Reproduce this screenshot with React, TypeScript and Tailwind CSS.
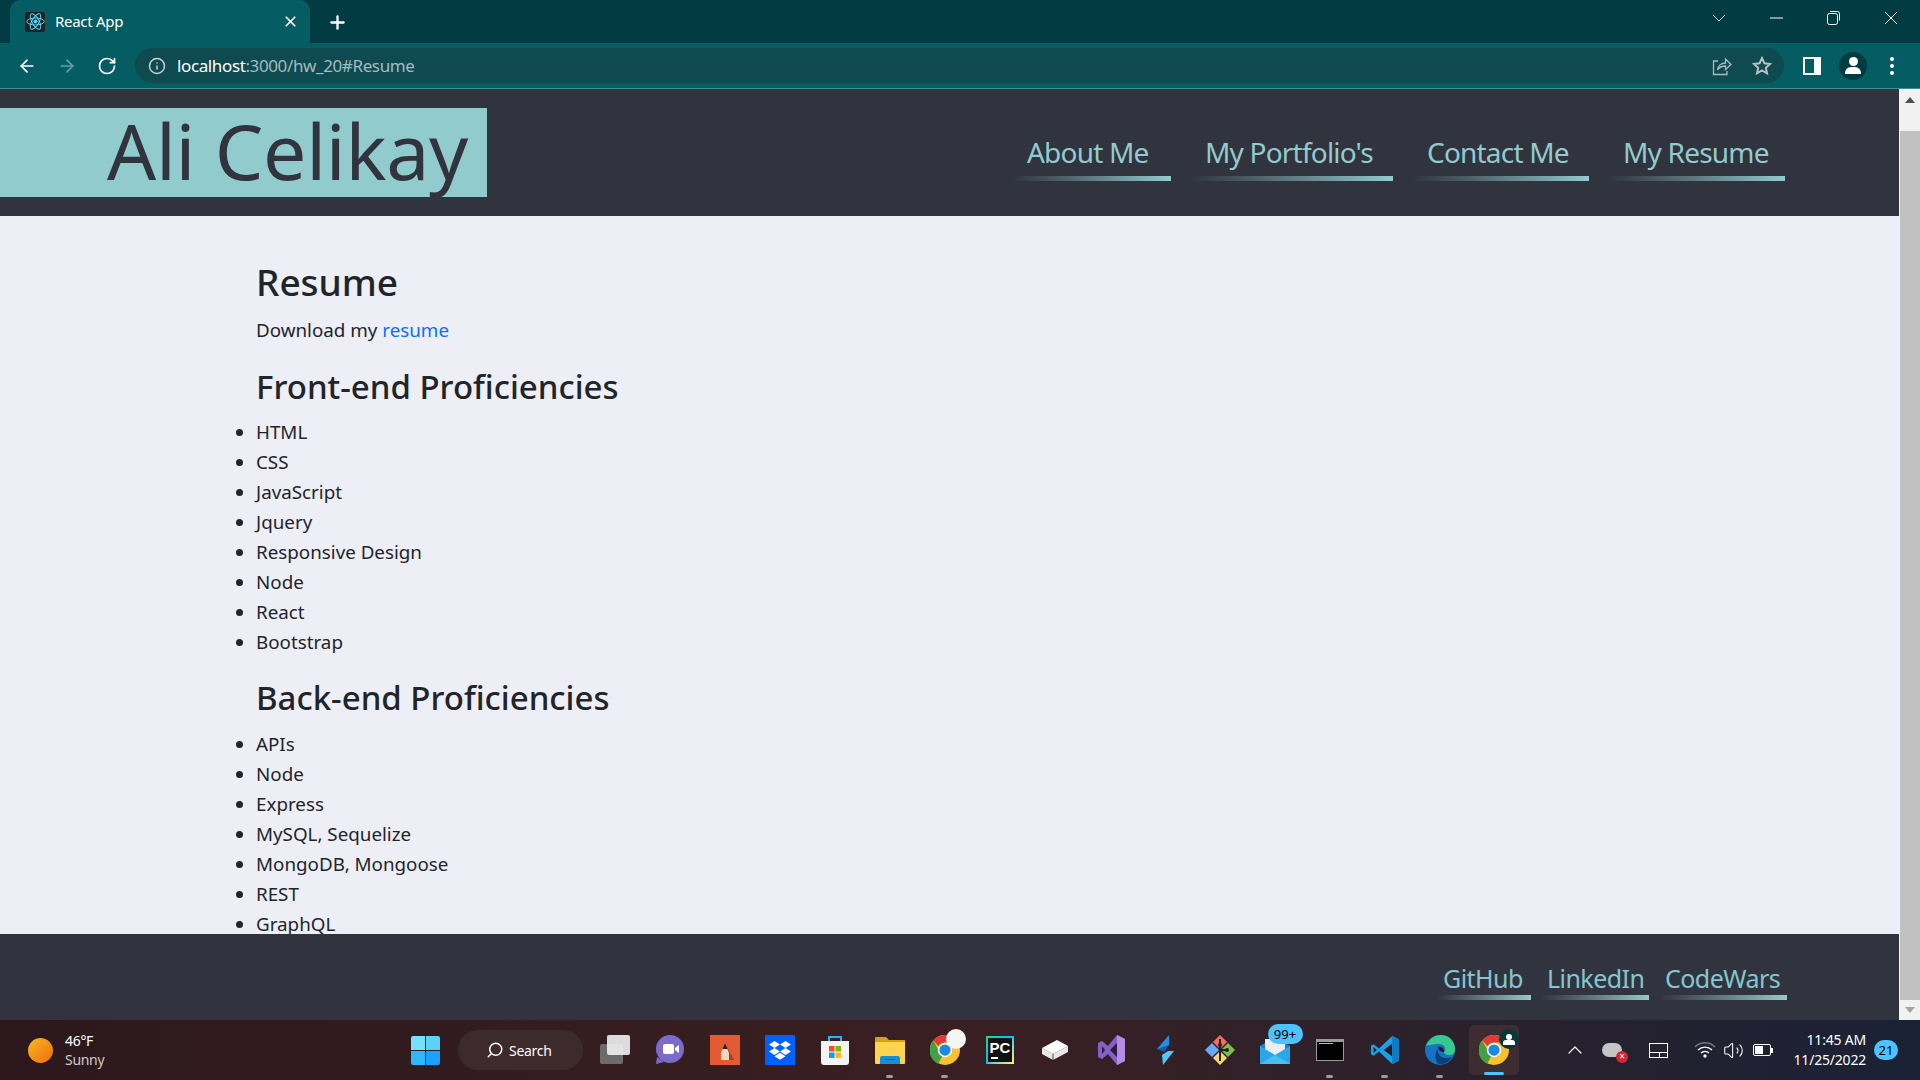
import React from "react";
import { ArrowLeft, ArrowRight, RotateCw, Info, Plus, X, ChevronUp, Search, Volume2 } from "lucide-react";

const navItems: [string, string][] = [
  ["About Me", "w-[158px]"],
  ["My Portfolio's", "w-[202px]"],
  ["Contact Me", "w-[176px]"],
  ["My Resume", "w-[176px]"],
];
const footItems: [string, string][] = [
  ["GitHub", "w-[94px]"],
  ["LinkedIn", "w-[108px]"],
  ["CodeWars", "w-[128px]"],
];
const front = ["HTML", "CSS", "JavaScript", "Jquery", "Responsive Design", "Node", "React", "Bootstrap"];
const back = ["APIs", "Node", "Express", "MySQL, Sequelize", "MongoDB, Mongoose", "REST", "GraphQL"];

function Atom({ size = 16, color = "#61dafb" }: { size?: number; color?: string }) {
  return (
    <svg width={size} height={size} viewBox="0 0 24 24" fill="none" stroke={color} strokeWidth="1.2">
      <circle cx="12" cy="12" r="2" fill={color} />
      <ellipse cx="12" cy="12" rx="11" ry="4.4" />
      <ellipse cx="12" cy="12" rx="11" ry="4.4" transform="rotate(60 12 12)" />
      <ellipse cx="12" cy="12" rx="11" ry="4.4" transform="rotate(120 12 12)" />
    </svg>
  );
}

function ChromeIcon({ size = 30 }: { size?: number }) {
  return (
    <svg width={size} height={size} viewBox="0 0 48 48">
      <circle cx="24" cy="24" r="24" fill="#fbc02d" />
      <path d="M24 0a24 24 0 0 1 20.8 12H24a12 12 0 0 0-10.4 6L5 8.500A24 24 0 0 1 24 0z" fill="#e53935" />
      <path d="M5 8.500l8.600 15.500a12 12 0 0 0 6.400 9.300L13 46A24 24 0 0 1 5 8.500z" fill="#43a047" />
      <circle cx="24" cy="24" r="11.500" fill="#fff" />
      <circle cx="24" cy="24" r="9" fill="#1e88e5" />
    </svg>
  );
}

const tbIcons: React.ReactNode[] = [
  <div key="tv" className="relative w-[30px] h-[30px]">
    <div className="absolute left-0 bottom-[1px] w-[23px] h-[20px] rounded-[2px] bg-[#6b6b6b]" />
    <div className="absolute right-0 top-0 w-[23px] h-[20px] rounded-[2px] bg-[#f1f1f1] opacity-90" />
  </div>,
  <svg key="meet" width="30" height="30" viewBox="0 0 30 30">
    <circle cx="15" cy="14" r="14" fill="#7b6ccc" />
    <path d="M2 22l-1 7 8-2z" fill="#7b6ccc" />
    <rect x="8" y="9" width="11" height="10" rx="2" fill="#fff" />
    <path d="M20 13l4-3v8l-4-3z" fill="#fff" />
  </svg>,
  <div key="skb" className="w-[30px] h-[30px] bg-[#e35a33] flex items-center justify-center">
    <svg width="30" height="30" viewBox="0 0 30 30">
      <path d="M15 8l9 17h-9z" fill="#a53d22" />
      <path d="M15 8l-4 10v7h8v-7z" fill="#f0d7c0" />
      <path d="M15 8l-2.500 6h5z" fill="#222" />
    </svg>
  </div>,
  <div key="db" className="w-[30px] h-[30px] bg-[#0061fe] flex items-center justify-center">
    <svg width="24" height="24" viewBox="0 0 24 24" fill="#fff">
      <path d="M6.500 3L1 6.500 6.500 10 12 6.500zM17.500 3L12 6.500 17.500 10 23 6.500zM1 13.500L6.500 17 12 13.500 6.500 10zM17.500 10L12 13.500 17.500 17 23 13.500zM6.500 18.200L12 21.700l5.500-3.500L12 14.700z" />
    </svg>
  </div>,
  <svg key="store" width="30" height="30" viewBox="0 0 30 30">
    <path d="M9 6V2h12v4" fill="none" stroke="#29b6f6" strokeWidth="2" />
    <path d="M1 6h28v21a3 3 0 0 1-3 3H4a3 3 0 0 1-3-3z" fill="#f3f3f3" />
    <rect x="9" y="11" width="5.500" height="5.500" fill="#f25022" />
    <rect x="15.500" y="11" width="5.500" height="5.500" fill="#7fba00" />
    <rect x="9" y="17.500" width="5.500" height="5.500" fill="#00a4ef" />
    <rect x="15.500" y="17.500" width="5.500" height="5.500" fill="#ffb900" />
  </svg>,
  <svg key="folder" width="30" height="30" viewBox="0 0 30 30">
    <path d="M0 3a1 1 0 0 1 1-1h10l3 3h16v8H0z" fill="#d9a010" />
    <path d="M0 7h30v21a1 1 0 0 1-1 1H1a1 1 0 0 1-1-1z" fill="#fdd350" />
    <path d="M5 23a2 2 0 0 1 2-2h16a2 2 0 0 1 2 2v6H5z" fill="#1290d8" />
    <rect x="10" y="24" width="10" height="1" fill="#0b5f95" />
  </svg>,
  <div key="ch" className="relative w-[30px] h-[30px]">
    <ChromeIcon />
    <div className="absolute -right-[6px] -top-[6px] w-[20px] h-[20px] rounded-full bg-[#f5f5f5]" />
  </div>,
  <div key="pc" className="w-[28px] h-[28px] p-[2px] bg-gradient-to-br from-[#21d789] via-[#07c3f2] to-[#fcf84a] flex">
    <div className="flex-1 bg-[#111] relative text-white text-[15px] font-bold leading-[15px] pl-[2px] pt-[2px]" style={{ fontFamily: "'Liberation Sans', sans-serif" }}>
      PC
      <div className="absolute left-[3px] bottom-[3px] w-[7px] h-[2px] bg-white" />
    </div>
  </div>,
  <svg key="box" width="28" height="22" viewBox="0 0 28 22">
    <path d="M1 9l15-8 11 6-15 8z" fill="#fff" />
    <path d="M1 9l11 6v6L1 15zM12 15l15-8v6l-15 8z" fill="#e8e8e8" />
    <path d="M12 15v6" stroke="#444" />
  </svg>,
  <svg key="vs" width="30" height="30" viewBox="0 0 30 30">
    <path d="M22 0l8 4v22l-8 4-9-11-6 5-4-2V8l4-2 6 5z" fill="#8661c5" />
    <path d="M22 8l-7 7 7 7z" fill="#2b1d42" />
    <path d="M7 11v8l3-4z" fill="#2b1d42" />
    <path d="M22 0l8 4v22l-8 4z" fill="#b48ce8" />
  </svg>,
  <svg key="bolt" width="20" height="30" viewBox="0 0 20 30">
    <path d="M14 0L2 14h6l6-4z" fill="#1f8fe5" />
    <path d="M8 30l11-14h-6l-6 4z" fill="#55c5f5" />
    <path d="M2 14l7 3 5-7z" fill="#0f5fa8" />
  </svg>,
  <svg key="gk" width="30" height="30" viewBox="0 0 30 30">
    <path d="M15 0l7 7-7 7-7-7z" fill="#f26d63" />
    <path d="M23 8l7 7-7 7-7-7z" fill="#7cc04b" />
    <path d="M15 16l7 7-7 7-7-7z" fill="#f5d76e" />
    <path d="M7 8l7 7-7 7-7-7z" fill="#6ea6f5" />
    <path d="M15 4v22M15 15h8" stroke="#222" strokeWidth="2" />
    <circle cx="15" cy="10" r="2" fill="#222" />
    <circle cx="22" cy="15" r="2" fill="#222" />
  </svg>,
  <div key="mail" className="relative w-[30px] h-[30px]">
    <svg width="30" height="30" viewBox="0 0 30 30" className="absolute left-0 top-0">
      <path d="M0 11L15 2l15 9v18H0z" fill="#1283d8" />
      <path d="M5 4h20v14L15 24 5 18z" fill="#e9eef2" />
      <path d="M0 11l15 9 15-9v18H0z" fill="#2aa7e8" />
      <path d="M0 29l15-9 15 9z" fill="#49c0f2" />
    </svg>
    <div className="absolute -top-[11px] left-[8px] w-[35px] h-[20px] rounded-full bg-[#4cc2ff] text-black text-[13px] leading-[20px] text-center">99+</div>
  </div>,
  <div key="term" className="w-[28px] h-[22px] bg-black border-[1px] border-[#999] border-t-[3px] relative">
    <div className="absolute left-[2px] top-[1px] w-[14px] h-[1px] bg-[#bbb]" />
  </div>,
  <svg key="vsc" width="30" height="30" viewBox="0 0 100 100">
    <path d="M74 3L96 14v72L74 97 30 55 12 69 3 64V36l9-5 18 14z" fill="#1a9fe8" />
    <path d="M74 28L46 50l28 22z" fill="#241e24" />
    <path d="M12 40v20l10-10z" fill="#241e24" />
    <path d="M74 3L96 14v72L74 97z" fill="#0d7cc4" />
  </svg>,
  <svg key="edge" width="30" height="30" viewBox="0 0 30 30">
    <circle cx="15" cy="15" r="15" fill="#1572c4" />
    <path d="M1 11C4 3 11 0 16 0c8 0 14 6 14 14 0 4-2 6-6 6-3 0-5-1-5-3 3-2 1-8-5-8C9 9 4 10 1 11z" fill="#36c98e" />
    <path d="M13 14c-1 4 2 9 8 9 2 0 4 0 6-1-2 4-7 8-13 7-4-2-5-12-1-15z" fill="#0b3f7a" />
    <path d="M13 12c4-1 6 1 6 5-3 0-6-2-6-5z" fill="#241e24" />
  </svg>,
];

export default function App() {
  return (
    <div className="w-[1920px] h-[1080px] overflow-hidden flex flex-col" style={{ fontFamily: "'Noto Sans', sans-serif" }}>
      {/* tab strip */}
      <div className="h-[43px] shrink-0 bg-[#033b43] flex items-end pl-[10px] text-white">
        <div className="w-[300px] h-[43px] bg-[#055c62] rounded-t-[10px] flex items-center pl-[15px] pr-[11px]">
          <div className="w-[20px] h-[20px] rounded-[2px] bg-[#222] flex items-center justify-center">
            <Atom size={19} />
          </div>
          <span className="ml-[10px] text-[15px] tracking-[-0.3px]">React App</span>
          <X className="ml-auto" size={17} strokeWidth={2.4} />
        </div>
        <Plus className="ml-[17px] mb-[10px]" size={21} strokeWidth={2.6} />
        <div className="ml-auto flex items-center h-[36px] mb-[7px] pr-[22px] gap-[44px]">
          <svg width="14" height="8" viewBox="0 0 14 8" fill="none" stroke="#c8d6d8" strokeWidth="1">
            <path d="M1 1l6 6 6-6" />
          </svg>
          <svg width="13" height="2" viewBox="0 0 13 2" fill="#fff">
            <rect width="13" height="1" y="0.500" />
          </svg>
          <svg width="13" height="14" viewBox="0 0 13 14" fill="none" stroke="#fff" strokeWidth="1">
            <rect x="0.500" y="2.500" width="10" height="11" rx="2" />
            <path d="M3 0.500h7.500a2 2 0 0 1 2 2v7" />
          </svg>
          <svg width="14" height="14" viewBox="0 0 14 14" fill="none" stroke="#fff" strokeWidth="1">
            <path d="M1 1l12 12M13 1L1 13" />
          </svg>
        </div>
      </div>
      {/* toolbar */}
      <div className="h-[46px] shrink-0 bg-[#055c62] border-b border-[#3f8f90] flex items-center text-white">
        <div className="w-[135px] flex items-center shrink-0 pl-[17px]">
          <ArrowLeft size={20} strokeWidth={2} />
          <ArrowRight size={20} strokeWidth={2} className="ml-[20px] text-[#6a9fa2]" />
          <RotateCw size={20} strokeWidth={2} className="ml-[20px]" />
        </div>
        <div className="w-[1649px] h-[35px] rounded-full bg-[#0f4a50] flex items-center pl-[12px] pr-[12px]">
          <Info size={18} strokeWidth={2} className="text-[#c3d3d4] ml-[1px]" />
          <span className="ml-[11px] text-[17px] tracking-[-0.38px] text-[#a3bcbe]">
            <span className="text-white">localhost</span>:3000/hw_20#Resume
          </span>
          <svg width="20" height="20" viewBox="0 0 20 20" fill="none" stroke="#a9bcbe" strokeWidth="1.300" className="ml-auto mr-[20px]">
            <path d="M6 5H1.500v13.500H15V15" />
            <path d="M5.500 14c.5-4 3.500-7 8-7V3l5.500 5.500-5.500 5V10c-3 0-6 1-8 4z" />
          </svg>
          <svg width="20" height="20" viewBox="0 0 24 24" fill="none" stroke="#b4c4c5" strokeWidth="2.400">
            <path d="M12 2.500l2.900 6.200 6.700.8-5 4.600 1.400 6.700-6-3.400-6 3.400 1.400-6.700-5-4.600 6.700-.8z" />
          </svg>
        </div>
        <div className="w-[18px] h-[18px] border-[2px] border-white border-r-[7px] ml-[19px]" />
        <div className="w-[28px] h-[28px] rounded-full bg-[#033b43] ml-[18px] flex flex-col items-center justify-center">
          <div className="w-[9px] h-[9px] rounded-full bg-white" />
          <div className="w-[16px] h-[7px] rounded-t-[6px] bg-white mt-[1px]" />
        </div>
        <div className="ml-[23px] flex flex-col gap-[3px]">
          <div className="w-[4px] h-[4px] rounded-full bg-white" />
          <div className="w-[4px] h-[4px] rounded-full bg-white" />
          <div className="w-[4px] h-[4px] rounded-full bg-white" />
        </div>
      </div>

      {/* page + scrollbar */}
      <div className="h-[931px] shrink-0 flex bg-[#f1f1f1]">
        <div className="w-[1899px] flex flex-col">
          <header className="h-[127px] shrink-0 bg-[#31343e] flex items-center justify-between pr-[114px]">
            <div className="w-[487px] h-[89px] mt-[-1px] bg-[#92cbce] text-[#31343e] pl-[107px] text-[77px] leading-[86px] tracking-[-0.3px] whitespace-nowrap">
              Ali Celikay
            </div>
            <nav className="flex gap-[20px] pt-[9px]">
              {navItems.map(([t, w]) => (
                <div key={t} className={`${w} flex flex-col`}>
                  <div className="h-[41px] -mt-[2px] mb-[2px] pl-[14px] text-[28px] leading-[41px] tracking-[-0.8px] text-[#92cbce] whitespace-nowrap">{t}</div>
                  <div className="h-[5px] mt-[1px] bg-gradient-to-r from-[#31343e] to-[#92cbce]" />
                </div>
              ))}
            </nav>
          </header>
          <main className="h-[718px] shrink-0 overflow-hidden bg-[#eeeef7] pl-[256px] pt-[42px] text-[#212529]">
            <h2 className="text-[37px] leading-[48px] font-medium mb-[9px]">Resume</h2>
            <p className="text-[18.800px] leading-[30px] mb-[21px]">
              Download my <a className="text-[#0d6efd]">resume</a>
            </p>
            <h3 className="text-[33px] leading-[42px] font-medium mb-[9px]">Front-end Proficiencies</h3>
            <ul className="list-disc text-[18.800px] leading-[30px] mb-[20px]">
              {front.map((f) => <li key={f}>{f}</li>)}
            </ul>
            <h3 className="text-[33px] leading-[42px] font-medium mb-[10px]">Back-end Proficiencies</h3>
            <ul className="list-disc text-[18.800px] leading-[30px]">
              {back.map((f) => <li key={f}>{f}</li>)}
            </ul>
          </main>
          <footer className="h-[86px] shrink-0 bg-[#31343e] flex justify-end pr-[112px] pt-[21px] gap-[10px]">
            {footItems.map(([t, w]) => (
              <div key={t} className={`${w} flex flex-col`}>
                <div className="h-[36px] mt-[5px] pl-[6px] text-[25px] leading-[36px] tracking-[-0.55px] text-[#86c6d0] whitespace-nowrap">{t}</div>
                <div className="h-[5px] mt-[-1px] bg-gradient-to-r from-[#31343e] to-[#92cbce]" />
              </div>
            ))}
          </footer>
        </div>
        <div className="w-[21px] shrink-0 bg-[#f1f1f1] flex flex-col items-center pl-[1px]">
          <div className="h-[42px] w-full flex justify-center pt-[7px]">
            <div className="w-0 h-0 border-l-[5px] border-r-[5px] border-b-[6px] border-l-transparent border-r-transparent border-b-[#505050] mt-[1px]" />
          </div>
          <div className="h-[869px] w-full bg-[#c1c1c1]" />
          <div className="flex-1 w-full flex justify-center items-center">
            <div className="w-0 h-0 border-l-[5px] border-r-[5px] border-t-[6px] border-l-transparent border-r-transparent border-t-[#a3a3a3]" />
          </div>
        </div>
      </div>

      {/* taskbar */}
      <div className="flex-1 flex items-center text-white bg-gradient-to-r from-[#2c181c] via-[#3a1f22] to-[#1a2135]">
        <div className="w-[411px] flex items-center shrink-0 pl-[28px]">
          <div className="w-[25px] h-[25px] rounded-full bg-gradient-to-br from-[#f5b71f] to-[#ee6c0c]" />
          <div className="ml-[12px] text-[14px] leading-[19px] tracking-[-0.3px]">
            <div>46°F</div>
            <div className="text-[#cfc9c9]">Sunny</div>
          </div>
        </div>
        <div className="w-[29px] shrink-0 grid grid-cols-2 gap-[1px]">
          <div className="h-[14px] rounded-tl-[2px] bg-[#76e0ff]" />
          <div className="h-[14px] rounded-tr-[2px] bg-[#5cd2fb]" />
          <div className="h-[14px] rounded-bl-[2px] bg-[#2cb8fa]" />
          <div className="h-[14px] rounded-br-[2px] bg-[#18a2fb]" />
        </div>
        <div className="ml-[18px] w-[125px] h-[40px] shrink-0 rounded-full bg-[#3c2a2c] flex items-center pl-[28px] text-[14px] tracking-[-0.3px]">
          <Search size={18} className="-scale-x-100 mr-[5px]" />
          Search
        </div>
        <div className="flex ml-[4px]">
          {tbIcons.map((ic, i) => (
            <div key={i} className="w-[55px] h-[60px] shrink-0 flex items-center justify-center relative">
              {ic}
              {[5, 6, 13, 14, 15].includes(i) && (
                <div className="absolute bottom-[2px] left-[24px] w-[7px] h-[3px] rounded-full bg-[#a09a9a]" />
              )}
            </div>
          ))}
          <div className="w-[50px] h-[50px] mt-[5px] ml-[2px] rounded-[5px] bg-[#3d2c30] flex items-center justify-center relative">
            <ChromeIcon />
            <div className="absolute right-[0px] top-[4px] w-[20px] h-[20px] rounded-full bg-[#06393f] flex flex-col items-center justify-center">
              <div className="w-[6px] h-[6px] rounded-full bg-white" />
              <div className="w-[12px] h-[5px] rounded-t-[3px] bg-white" />
            </div>
            <div className="absolute bottom-[0px] left-[15px] w-[20px] h-[3px] rounded-full bg-[#4cc2ff]" />
          </div>
        </div>
        <ChevronUp size={24} strokeWidth={1.2} className="ml-[44px]" />
        <div className="relative w-[20px] h-[14px] ml-[15px] rounded-full bg-[#c5c5c5]">
          <div className="absolute -right-[6px] -bottom-[6px] w-[12px] h-[12px] rounded-full bg-[#d92431] text-[10px] leading-[11px] text-center">×</div>
        </div>
        <div className="ml-[27px] w-[19px] h-[15px] border border-white relative">
          <div className="absolute left-0 right-0 top-[8px] h-px bg-white" />
          <div className="absolute left-[9px] top-[8px] bottom-0 w-px bg-white" />
        </div>
        <svg width="22" height="16" viewBox="0 0 22 16" fill="none" stroke="#fff" strokeWidth="1.4" className="ml-[26px]">
          <path d="M1 5a14 14 0 0 1 20 0" stroke="#777" />
          <path d="M4 8a10 10 0 0 1 14 0" />
          <path d="M7 11a6 6 0 0 1 8 0" />
          <circle cx="11" cy="14" r="1" fill="#fff" />
        </svg>
        <Volume2 size={21} strokeWidth={1.2} className="ml-[7px]" />
        <div className="ml-[9px] w-[18px] h-[12px] border border-white rounded-[2px] p-[1px]">
          <div className="w-[8px] h-full bg-white" />
        </div>
        <div className="w-[2px] h-[5px] bg-white" />
        <div className="ml-[18px] w-[75px] text-right text-[14px] leading-[20px] tracking-[-0.2px] whitespace-nowrap">
          <div>11:45 AM</div>
          <div>11/25/2022</div>
        </div>
        <div className="ml-[8px] w-[24px] h-[20px] rounded-full bg-[#4cc2ff] text-black text-[13px] leading-[20px] text-center">21</div>
      </div>
    </div>
  );
}
